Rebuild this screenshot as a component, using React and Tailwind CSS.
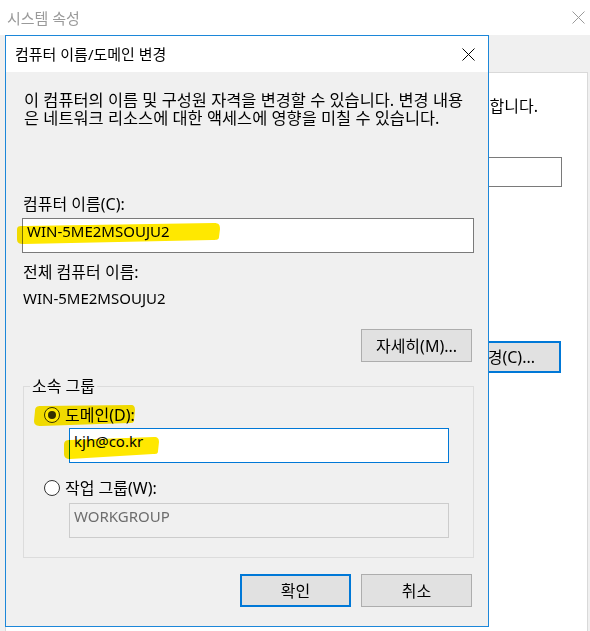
import React from 'react';

function CloseIcon({ className = '' }) {
  return (
    <svg className={className} width="13" height="13" viewBox="0 0 13 13" fill="none" stroke="currentColor" strokeWidth="1">
      <path d="M0.5 0.5L12.5 12.5M12.5 0.5L0.5 12.5" />
    </svg>
  );
}

// yellow highlighter stroke, multiplied over what is under it
function Marker({ className, w, h, d }) {
  return (
    <svg
      className={`pointer-events-none absolute mix-blend-multiply ${className}`}
      width={w}
      height={h}
      viewBox={`0 0 ${w} ${h}`}
    >
      <path d={d} fill="#ffe800" />
    </svg>
  );
}

function Radio({ checked }) {
  return (
    <span className="flex h-[16px] w-[16px] shrink-0 items-center justify-center rounded-full border border-[#333333] bg-white">
      {checked && <span className="h-[8px] w-[8px] rounded-full bg-[#333333]" />}
    </span>
  );
}

export default function App() {
  return (
    <div className="relative h-[631px] w-[590px] overflow-hidden bg-[#f0f0f0] font-['Noto_Sans','Noto_Sans_CJK_KR',sans-serif] text-[16px] leading-[18px] text-black">
      {/* 시스템 속성 (parent window) */}
      <div className="flex h-full flex-col">
        <div className="flex h-[35px] shrink-0 items-center justify-between bg-white pl-[7px] pr-[5px]">
          <span className="text-[15px] text-[#9a9a9a]">시스템 속성</span>
          <CloseIcon className="text-[#9a9a9a]" />
        </div>
        <div className="flex flex-1 flex-col pl-[5px] pr-[2px] pt-[37px]">
          <div className="flex flex-1 flex-col border border-b-0 border-[#d9d9d9] bg-white">
            <p className="mt-[24px] whitespace-nowrap pr-[49px] text-right">
              다음 정보를 사용하여 네트워크에서 이 컴퓨터를 식별합니다.
            </p>
            <div className="mt-[42px] flex items-center justify-end gap-2 pr-[25px]">
              <span>컴퓨터 설명(D):</span>
              <div className="h-[30px] w-[260px] border border-[#7a7a7a] bg-white" />
            </div>
            <div className="mt-[154px] flex justify-end pr-[26px]">
              <button className="h-[32px] w-[114px] border-2 border-[#0078d7] bg-[#e1e1e1]">변경(C)...</button>
            </div>
          </div>
        </div>
      </div>

      {/* 컴퓨터 이름/도메인 변경 dialog */}
      <div className="absolute left-[5px] top-[35px] flex h-[592px] w-[484px] flex-col border border-[#1c87d9] bg-[#f0f0f0]">
        <div className="flex h-[36px] shrink-0 items-center justify-between bg-white pl-[9px] pr-[13px]">
          <span className="text-[15px]">컴퓨터 이름/도메인 변경</span>
          <CloseIcon />
        </div>

        <div className="flex flex-col pl-[16px] pr-[14px] pt-[19px]">
          <p className="whitespace-nowrap pl-[2px] text-[16.4px]">
            이 컴퓨터의 이름 및 구성원 자격을 변경할 수 있습니다. 변경 내용
            <br />
            은 네트워크 리소스에 대한 액세스에 영향을 미칠 수 있습니다.
          </p>

          <p className="mt-[68px] pl-[1px]">컴퓨터 이름(C):</p>
          <div className="relative mt-[5px] h-[35px] border border-[#7a7a7a] bg-white pl-[4px] pt-[3px] text-[15px]">
            <span>WIN-5ME2MSOUJU2</span>
            <Marker
              className="left-[-7px] top-[3px]"
              w={205}
              h={23}
              d="M1 8 C1 4 3 4 8 4 L198 1 C203 1 204 3 204 7 L203 15 C203 18 200 18 196 18 L8 22 C3 22 1 21 1 17 Z"
            />
          </div>

          <p className="mt-[10px] pl-[1px]">전체 컴퓨터 이름:</p>
          <p className="mt-[8px] pl-[1px] text-[15px]">WIN-5ME2MSOUJU2</p>

          <div className="mt-[22px] flex justify-end pr-[2px]">
            <button className="h-[33px] w-[111px] border border-[#adadad] bg-[#e1e1e1]">자세히(M)...</button>
          </div>

          <fieldset className="ml-[1px] mt-[15px] border border-[#dcdcdc]">
            <legend className="ml-[6px] px-[2px]">소속 그룹</legend>
            <div className="flex flex-col pb-[19px] pt-[11px]">
              <div className="relative flex items-center gap-[5px] pl-[20px]">
                <Radio checked />
                <span>도메인(D):</span>
                <Marker
                  className="left-[9px] top-[-1px]"
                  w={103}
                  h={22}
                  d="M2 6 C2 2 4 1 8 1 L98 0 C101 0 102 2 102 5 L101 15 C101 18 99 18 96 18 L8 21 C4 21 1 20 1 16 Z"
                />
              </div>
              <div className="relative ml-[45px] mt-[4px] h-[35px] w-[380px] border border-[#0078d7] bg-white pl-[4px] pt-[3px] text-[15px]">
                <span>kjh@co.kr</span>
                <Marker
                  className="left-[-7px] top-[7px]"
                  w={97}
                  h={24}
                  d="M1 9 C1 5 3 4 7 4 L91 1 C95 1 96 3 96 6 L95 15 C95 18 93 18 90 18 L7 23 C3 23 1 21 1 18 Z"
                />
              </div>

              <div className="mt-[16px] flex items-center gap-[5px] pl-[20px]">
                <Radio />
                <span>작업 그룹(W):</span>
              </div>
              <div className="ml-[45px] mt-[6px] h-[35px] w-[380px] border border-[#cccccc] bg-[#f0f0f0] pl-[4px] pt-[3px] text-[15px] text-[#6d6d6d]">
                WORKGROUP
              </div>
            </div>
          </fieldset>

          <div className="mt-[16px] flex justify-end gap-[10px] pr-[2px]">
            <button className="h-[33px] w-[111px] border-2 border-[#0078d7] bg-[#e1e1e1]">확인</button>
            <button className="h-[33px] w-[111px] border border-[#adadad] bg-[#e1e1e1]">취소</button>
          </div>
        </div>
      </div>
    </div>
  );
}
